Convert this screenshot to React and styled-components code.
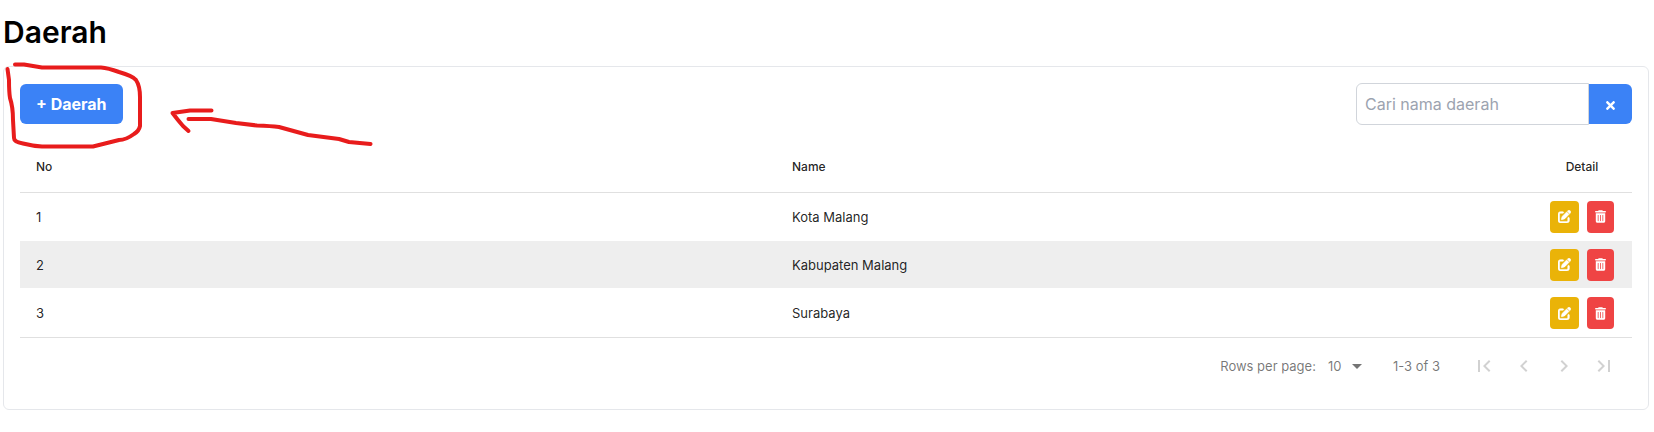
import React, { useState } from "react";
import styled, { createGlobalStyle } from "styled-components";
import { FaTimes } from "react-icons/fa";
import { FaPenToSquare, FaTrashCan } from "react-icons/fa6";

const GlobalStyle = createGlobalStyle`
  *, *::before, *::after { box-sizing: border-box; }
  body {
    margin: 0;
    background: #fff;
    color: #000;
    font-family: Inter, "Liberation Sans", sans-serif;
    font-size: 16px;
    line-height: 24px;
  }
  button, input, select { font: inherit; margin: 0; }
`;

const Page = styled.main`
  position: relative;
  padding: 14px 5px 16px 3px;
`;

const Title = styled.h1`
  margin: 0 0 16px;
  font-size: 30px;
  line-height: 36px;
  font-weight: 600;
`;

const Card = styled.section`
  padding: 16px;
  border: 1px solid #e5e7eb;
  border-radius: 6px;
`;

const Toolbar = styled.div`
  display: flex;
  align-items: center;
  justify-content: space-between;
  margin-bottom: 16px;
`;

const PrimaryButton = styled.button`
  display: inline-flex;
  align-items: center;
  justify-content: center;
  height: 40px;
  padding: 0 16px;
  border: 0;
  border-radius: ${(p) => (p.$attached ? "0 6px 6px 0" : "6px")};
  background: #3b82f6;
  color: #fff;
  font-weight: 700;
  cursor: pointer;
  svg { display: block; width: 11px; height: 13px; margin-top: 2px; }
`;

const Search = styled.form`
  display: flex;
  align-items: center;
`;

const SearchInput = styled.input`
  width: 233px;
  height: 42px;
  padding: 8px;
  border: 1px solid #d1d5db;
  border-radius: 6px 0 0 6px;
  background: #fff;
  color: #111827;
  &::placeholder { color: #9ca3af; opacity: 1; }
`;

const Table = styled.table`
  width: 100%;
  table-layout: fixed;
  border-collapse: separate;
  border-spacing: 0;
  color: rgba(0, 0, 0, 0.87);
`;

const HeadCell = styled.th`
  width: ${(p) => (p.$narrow ? "100px" : "auto")};
  height: 52px;
  padding: 0 16px;
  border-bottom: 1px solid #e0e0e0;
  font-size: 12px;
  line-height: 16px;
  font-weight: 500;
  text-align: ${(p) => (p.$narrow ? "center" : "left")};
`;

const Row = styled.tr`
  &:nth-child(even) td { background: #eee; }
  &:last-child td { border-bottom: 0; }
`;

const Cell = styled.td`
  height: 48px;
  padding: 0 16px;
  border-bottom: 1px solid #fff;
  font-size: 13px;
  line-height: 16px;
`;

const Actions = styled.div`
  display: flex;
  justify-content: center;
  gap: 8px;
`;

const IconButton = styled.button`
  display: flex;
  align-items: center;
  justify-content: center;
  height: 32px;
  padding: 0 8px;
  border: 0;
  border-radius: 4px;
  background: ${(p) => (p.$danger ? "#ef4444" : "#eab308")};
  color: #fff;
  cursor: pointer;
  svg {
    display: block;
    width: ${(p) => (p.$danger ? "11px" : "13px")};
    height: 13px;
    stroke: currentColor;
    stroke-width: ${(p) => (p.$danger ? "0" : "20px")};
  }
`;

const Pagination = styled.nav`
  display: flex;
  align-items: center;
  justify-content: flex-end;
  height: 56px;
  padding: 0 8px;
  border-top: 1px solid #e0e0e0;
  color: rgba(0, 0, 0, 0.54);
  font-size: 13px;
  line-height: 24px;
`;

const SelectWrap = styled.div`
  display: grid;
  align-items: center;
  margin-left: 4px;
  > * { grid-area: 1 / 1; }
  svg {
    justify-self: end;
    fill: rgba(0, 0, 0, 0.54);
    pointer-events: none;
  }
`;

const RowsSelect = styled.select`
  width: 49px;
  height: 24px;
  padding: 0 24px 0 8px;
  border: 0;
  background: transparent;
  color: inherit;
  appearance: none;
  cursor: pointer;
`;

const Range = styled.span`
  margin: 0 24px;
`;

const PageButton = styled.button`
  width: 40px;
  height: 40px;
  padding: 8px;
  border: 0;
  background: transparent;
  svg { display: block; fill: rgba(0, 0, 0, 0.18); }
`;

const Annotation = styled.svg`
  position: absolute;
  top: 0;
  left: 0;
  pointer-events: none;
  fill: none;
  stroke: #e81c1c;
  stroke-width: 4;
  stroke-linecap: round;
  stroke-linejoin: round;
`;

const regions = ["Kota Malang", "Kabupaten Malang", "Surabaya"];

const pageControls = [
  { label: "First page", d: "M18.41 16.59L13.82 12l4.59-4.59L17 6l-6 6 6 6zM6 6h2v12H6z" },
  { label: "Previous page", d: "M15.41 7.41L14 6l-6 6 6 6 1.41-1.41L10.83 12z" },
  { label: "Next page", d: "M10 6L8.59 7.41 13.17 12l-4.58 4.59L10 18l6-6z" },
  { label: "Last page", d: "M5.59 7.41L10.18 12l-4.59 4.59L7 18l6-6-6-6zM16 6h2v12h-2z" },
];

export default function App() {
  const [query, setQuery] = useState("");

  return (
    <>
      <GlobalStyle />
      <Page>
        <Title>Daerah</Title>
        <Card>
          <Toolbar>
            <PrimaryButton type="button">+ Daerah</PrimaryButton>
            <Search onSubmit={(e) => e.preventDefault()}>
              <SearchInput
                aria-label="Cari nama daerah"
                placeholder="Cari nama daerah"
                value={query}
                onChange={(e) => setQuery(e.target.value)}
              />
              <PrimaryButton
                type="button"
                $attached
                aria-label="Clear"
                onClick={() => setQuery("")}
              >
                <FaTimes />
              </PrimaryButton>
            </Search>
          </Toolbar>
          <Table>
            <thead>
              <tr>
                <HeadCell scope="col">No</HeadCell>
                <HeadCell scope="col">Name</HeadCell>
                <HeadCell scope="col" $narrow>Detail</HeadCell>
              </tr>
            </thead>
            <tbody>
              {regions.map((name, i) => (
                <Row key={name}>
                  <Cell>{i + 1}</Cell>
                  <Cell>{name}</Cell>
                  <Cell>
                    <Actions>
                      <IconButton type="button" aria-label={`Edit ${name}`}>
                        <FaPenToSquare />
                      </IconButton>
                      <IconButton type="button" $danger aria-label={`Delete ${name}`}>
                        <FaTrashCan />
                      </IconButton>
                    </Actions>
                  </Cell>
                </Row>
              ))}
            </tbody>
          </Table>
          <Pagination aria-label="Pagination">
            <label htmlFor="rows">Rows per page:</label>
            <SelectWrap>
              <RowsSelect id="rows" defaultValue="10">
                <option>10</option>
                <option>15</option>
                <option>20</option>
              </RowsSelect>
              <svg width="24" height="24" viewBox="0 0 24 24" aria-hidden="true">
                <path d="M7 10l5 5 5-5z" />
              </svg>
            </SelectWrap>
            <Range>1-3 of 3</Range>
            {pageControls.map(({ label, d }) => (
              <PageButton key={label} type="button" disabled aria-label={label}>
                <svg width="24" height="24" viewBox="0 0 24 24" aria-hidden="true">
                  <path d={d} />
                </svg>
              </PageButton>
            ))}
          </Pagination>
        </Card>
        <Annotation width="400" height="160" viewBox="0 0 400 160" aria-hidden="true">
          <path d="M15 64.500H24L42 67.500H101Q108 68 119 72Q133 76 136 80Q140 86 140 97V126Q139 131 134 134Q126 140 119 140L93 146.500H42Q33 146 23 143.500Q14 142 14 138L13 120Q13 107 10 98Q9 92 9 80L7.500 69" />
          <path d="M370.500 144L349 142L339 139L308 135L279 127Q271 126 257 125.500L236 123L211 119H188.500" />
          <path d="M211.500 110.500H190L172.500 113Q177 119 183 126L188.500 131" />
        </Annotation>
      </Page>
    </>
  );
}
